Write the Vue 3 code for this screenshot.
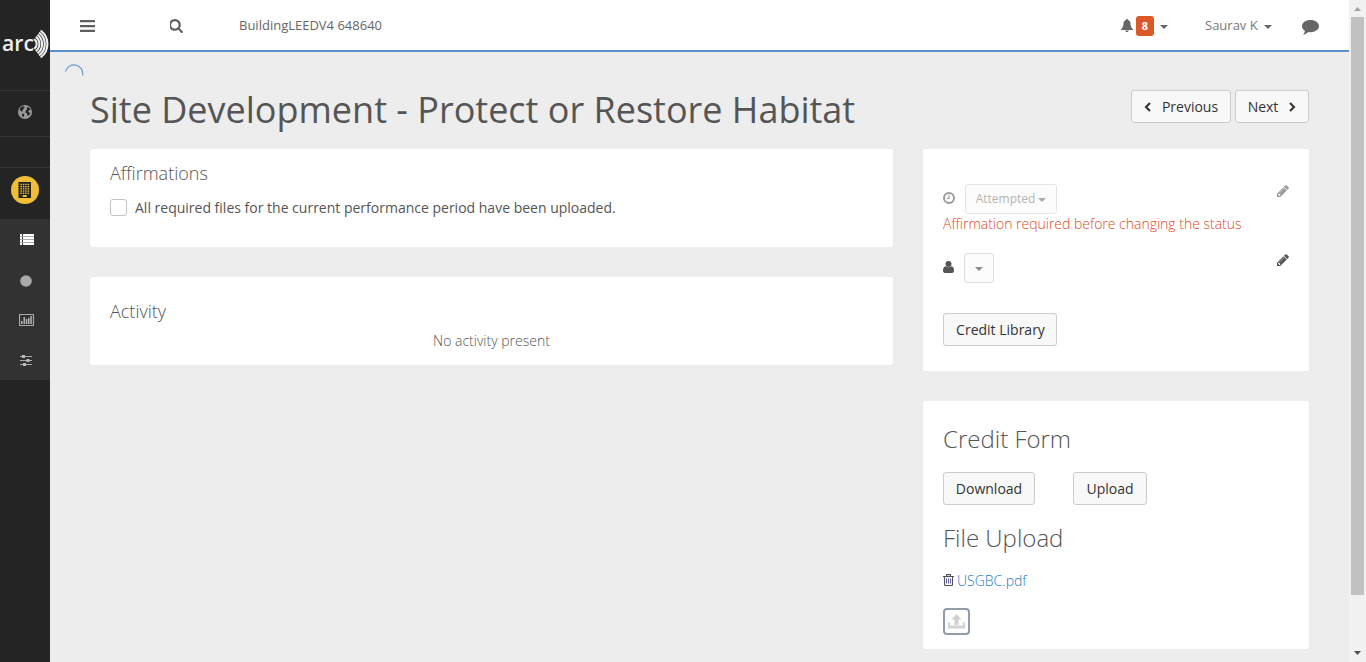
<script setup>
const arcs = [6.2, 8.9, 11.6, 14.3, 16.9].map((r) => {
  const dx = r * 0.6
  const dy = r * 0.8
  return `M${30.5 + dx} ${44 - dy}A${r} ${r} 0 0 1 ${30.5 + dx} ${44 + dy}`
})
const windows = []
for (let y = 0; y < 5; y++) for (let x = 0; x < 4; x++) windows.push({ x: 2.4 + x * 2.4, y: 1.8 + y * 2.2 })
const pencil =
  'M491 1536l91-91-235-235-91 91v107h128v128h107zm523-928q0-22-22-22-10 0-17 7l-542 542q-7 7-7 17 0 22 22 22 10 0 17-7l542-542q7-7 7-17zm-54-192l416 416-832 832h-416v-416zm683 96q0 53-37 90l-166 166-416-416 166-165q36-38 90-38 53 0 91 38l235 234q37 39 37 91z'
</script>

<template>
  <div class="app">
    <aside class="sidebar">
      <div class="logo">
        <svg width="50" height="90" viewBox="0 0 50 90">
          <text x="2" y="50.500" textLength="32" lengthAdjust="spacingAndGlyphs">arc</text>
          <path v-for="d in arcs" :key="d" :d="d" fill="none" stroke="#eee" stroke-width="2.1" />
        </svg>
      </div>
      <div class="cell globe">
        <svg width="14" height="14" viewBox="0 0 14 14">
          <circle cx="7" cy="7" r="7" fill="#999" />
          <path d="M2.200 3L4 1.500l2-.3.900 1-1.400.8.200 1.300-1.500.8.400 1.300L3 6.200 1.800 5.200zM9 1.700l2.700 1.300 1.100 2.300-1.600-.4-.9 1.300.8 1.500 1.200-.2-.8 2.300-1.900 1.200-.6-2.500-1.500-.9.200-1.800 1.500-1.300-.7-1.200.9-.8zM4.200 8.200l1.900 1.100.1 1.300-1.100 1.700-1.100-1.800z" fill="#242424" />
        </svg>
      </div>
      <div class="cell blank"></div>
      <div class="cell project">
        <div class="disc">
          <svg width="14" height="16" viewBox="0 0 14 16">
            <rect x=".5" width="12.500" height="16" fill="#242424" />
            <rect v-for="(w, i) in windows" :key="i" :x="w.x" :y="w.y" width="1.500" height="1.300" fill="#efbe36" />
            <rect x="4.700" y="13" width="4" height="2" fill="#efbe36" />
          </svg>
        </div>
      </div>
      <nav class="sub">
        <div class="item list">
          <svg width="14" height="11" viewBox="0 0 14 11">
            <path d="M0 0h2v2H0zM3 0h11v2H3zM0 3h2v2H0zM3 3h11v2H3zM0 6h2v2H0zM3 6h11v2H3zM0 9h2v2H0zM3 9h11v2H3z" fill="#fff" />
            <path d="M0 2h14v1H0zM0 5h14v1H0zM0 8h14v1H0z" fill="#aaa" />
          </svg>
        </div>
        <div class="item dot">
          <svg width="12" height="12" viewBox="0 0 12 12"><circle cx="6" cy="6" r="5.800" fill="#aaa" /></svg>
        </div>
        <div class="item chart">
          <svg width="15" height="12" viewBox="0 0 15 12">
            <rect x=".5" y=".5" width="14" height="11" rx=".5" fill="none" stroke="#b0a8b0" stroke-width="1.200" />
            <path d="M2 7h1.500v3H2zM4.500 3H6v7H4.500zM6.800 5h1.500v5H6.800zM9 4h1.500v6H9zM11.300 2h1.500v8h-1.500z" fill="#b4b4b4" />
          </svg>
        </div>
        <div class="item dot">
          <svg width="12" height="11" viewBox="0 0 12 11">
            <path d="M0 1h12v1H0zM0 5h12v1H0zM0 9h12v1H0z" fill="#aaa" />
            <path d="M2 0h3v3H2zM6.500 4h3v3h-3zM3 8h3v3H3z" fill="#bbb" />
          </svg>
        </div>
      </nav>
    </aside>

    <div class="page">
      <header class="topbar">
        <svg class="menu" width="15" height="12" viewBox="0 0 15 12"><path d="M0 0h15v2.200H0zM0 5h15v2.200H0zM0 9.800h15V12H0z" fill="#5f5f5f" /></svg>
        <svg class="search" width="14" height="14" viewBox="128 128 1664 1664">
          <path fill="#5f5f5f" d="M1152 832q0-185-131.500-316.500t-316.500-131.500-316.500 131.500-131.500 316.500 131.500 316.500 316.500 131.500 316.500-131.500 131.500-316.500zm512 832q0 52-38 90t-90 38q-54 0-90-38l-343-342q-179 124-399 124-143 0-273.500-55.500t-225-150-150-225-55.500-273.500 55.500-273.500 150-225 225-150 273.500-55.500 273.500 55.500 225 150 150 225 55.500 273.500q0 220-124 399l343 343q37 37 37 90z" />
        </svg>
        <span class="crumb">BuildingLEEDV4 648640</span>
        <div class="tools">
          <svg class="bell" width="12" height="13" viewBox="0 0 12 13"><path d="M6 0c.7 0 1 .4 1 1 1.700.4 2.400 1.700 2.500 3.300.1 2.800.7 4.400 2.500 6.200v.5H0v-.5c1.800-1.800 2.400-3.400 2.500-6.200C2.600 2.700 3.300 1.400 5 1c0-.6.3-1 1-1zM4.300 11.500h3.400C7.600 12.500 6.900 13 6 13s-1.600-.5-1.700-1.500z" fill="#666" /></svg>
          <span class="badge">8</span>
          <i class="caret c1"></i>
          <span class="user">Saurav K</span>
          <i class="caret c2"></i>
          <svg class="chat" width="17" height="15" viewBox="0 0 17 15"><path d="M8.500 0C13.300 0 17 2.700 17 6.100s-3.700 6.100-8.500 6.100c-.8 0-1.500-.1-2.200-.2C4.800 13.500 3 14.400.9 14.800c1.200-1.100 1.800-2.400 1.900-4C1.100 9.700 0 8 0 6.100 0 2.700 3.700 0 8.500 0z" fill="#666" /></svg>
        </div>
      </header>

      <main class="content">
        <svg class="spinner" width="20" height="12" viewBox="0 0 20 12"><path d="M1.500 7.700A8.700 8.700 0 0 1 18.500 11.500" fill="none" stroke="#6d9bd1" stroke-width="1.200" /></svg>
        <div class="heading">
          <h1>Site Development - Protect or Restore Habitat</h1>
          <div class="pager">
            <button class="btn prev">
              <svg width="7" height="10" viewBox="0 0 7 10"><path d="M6 1L2 5l4 4" fill="none" stroke="#333" stroke-width="2.100" /></svg>
              <span>Previous</span>
            </button>
            <button class="btn next">
              <span>Next</span>
              <svg width="7" height="10" viewBox="0 0 7 10"><path d="M1 1l4 4-4 4" fill="none" stroke="#333" stroke-width="2.100" /></svg>
            </button>
          </div>
        </div>
        <div class="columns">
          <div class="left">
            <section class="card affirm">
              <h4>Affirmations</h4>
              <label class="check"><i class="box"></i><span>All required files for the current performance period have been uploaded.</span></label>
            </section>
            <section class="card activity">
              <h4>Activity</h4>
              <p><span>No activity present</span></p>
            </section>
          </div>
          <div class="right">
            <section class="card status">
              <div class="row first">
                <svg class="clock" width="12" height="12" viewBox="0 0 12 12"><circle cx="6" cy="6" r="5" fill="none" stroke="#999" stroke-width="1.900" /><path d="M6 3v3.500H3.800" fill="none" stroke="#999" stroke-width="1.100" /></svg>
                <span class="select attempted"><span>Attempted</span><i class="caret"></i></span>
                <svg class="pencil faded" width="12" height="12" viewBox="128 256 1536 1536"><path :d="pencil" transform="translate(0 128)" /></svg>
              </div>
              <p class="warn"><span>Affirmation required before changing the status</span></p>
              <div class="row second">
                <svg class="person" width="11" height="12" viewBox="0 0 11 12"><ellipse cx="5.500" cy="3" rx="3" ry="3" fill="#555" /><path d="M2.500 5.200c1.800 1.500 4.200 1.500 6 0C10.300 5.500 11 7.300 11 9.500c0 1.500-.8 2.500-2 2.500H2c-1.200 0-2-1-2-2.500 0-2.200.7-4 2.500-4.300z" fill="#555" /></svg>
                <span class="select empty"><i class="caret"></i></span>
                <svg class="pencil" width="12" height="12" viewBox="128 256 1536 1536"><path :d="pencil" transform="translate(0 128)" /></svg>
              </div>
              <button class="btn library">Credit Library</button>
            </section>
            <section class="card forms">
              <h3 class="credit">Credit Form</h3>
              <div class="actions">
                <button class="btn download">Download</button>
                <button class="btn upload">Upload</button>
              </div>
              <h3 class="file-title">File Upload</h3>
              <div class="file">
                <svg width="11" height="12" viewBox="0 0 11 12"><path d="M0 2.500h11M3.500 2.500V.600h4v1.900M1.500 2.500v8c0 .6.300 1 .9 1h6.200c.6 0 .9-.4.9-1v-8" fill="none" stroke="#505060" stroke-width="1.100" /><path d="M3.500 4.500v5M5.500 4.500v5M7.500 4.500v5" stroke="#5f5f9c" stroke-width="1" /></svg>
                <a>USGBC.pdf</a>
              </div>
              <div class="drop">
                <svg width="17" height="15" viewBox="0 0 17 15"><path d="M8.500 0l5 5.500h-3V11h-4V5.500h-3zM0 8.500h2.200v3h12.600v-3H17v6H0z" fill="#d2d2d2" /></svg>
              </div>
            </section>
          </div>
        </div>
      </main>
    </div>

    <div class="scrollbar">
      <svg width="17" height="17" viewBox="0 0 17 17"><path d="M5 11l3.500-4 3.500 4z" fill="#a3a3a3" /></svg>
      <div class="thumb"></div>
      <svg class="down" width="17" height="17" viewBox="0 0 17 17"><path d="M5 6l3.500 4L12 6z" fill="#505050" /></svg>
    </div>
  </div>
</template>

<style>
body { overflow: hidden; }
</style>

<style scoped>
* { box-sizing: border-box; }
svg { display: block; flex: none; }
h1, h3, h4, p { margin: 0; }
.app { display: flex; width: 1366px; height: 662px; overflow: hidden; background: #ededed; font-family: "Open Sans", sans-serif; color: #555; font-size: 14px; }
.sidebar { width: 50px; flex: none; background: #242424; }
.logo { height: 90px; }
.logo text { font: 600 22px "Open Sans", sans-serif; fill: #eee; }
.cell { border-top: 1px solid #343434; display: flex; justify-content: center; }
.globe { height: 46px; padding-top: 14px; }
.blank { height: 31px; }
.project { height: 52px; padding-top: 8px; }
.disc { width: 28px; height: 28px; border-radius: 50%; background: #efbe36; display: flex; align-items: center; justify-content: center; }
.sub { height: 161px; background: #323232; padding-top: 1px; }
.item { height: 40px; display: flex; align-items: center; justify-content: center; padding-left: 2px; }
.list { padding-bottom: 1px; padding-left: 3px; }
.dot { padding: 1px 0 0 1px; }
.chart { padding-left: 3px; }
.page { width: 1299px; flex: none; }
.topbar { height: 52px; background: #fff; border-bottom: 2px solid #5b92cb; display: flex; align-items: center; padding-left: 30px; }
.menu { margin-top: 2px; }
.search { margin-left: 74.5px; margin-top: 1px; }
.crumb { margin-left: 55.5px; font-size: 13px; line-height: 20px; color: #666; white-space: nowrap; }
.tools { margin-left: auto; display: flex; align-items: center; padding-right: 30px; }
.badge { width: 18px; height: 20px; margin: 1px 0 0 3px; border-radius: 3px; background: #dd5828; color: #fff; font-weight: 700; font-size: 11px; line-height: 20px; text-align: center; }
.caret { width: 0; height: 0; border: 4px solid transparent; border-top-color: currentColor; border-bottom: 0; color: #666; flex: none; }
.c1 { margin: 3px 0 0 6px; }
.user { margin-left: 37px; width: 54px; font-size: 13px; line-height: 20px; color: #777; white-space: nowrap; }
.c2 { margin: 3px 0 0 5px; }
.chat { margin: 5px 0 0 30px; }
.content { height: 610px; padding: 0 40px; }
.spinner { margin-left: -26px; position: relative; top: 12px; }
.heading { display: flex; justify-content: space-between; height: 85px; }
h1 { font-size: 36px; font-weight: 400; line-height: 48px; margin-top: 22px; white-space: nowrap; color: #555; }
.pager { display: flex; gap: 4px; margin-top: 26px; }
.btn { height: 33px; border: 1px solid #ccc; border-radius: 3px; background: #f8f8f8; color: #333; font: 400 14px/20px "Open Sans", sans-serif; padding: 0; display: flex; align-items: center; justify-content: center; white-space: nowrap; }
.prev { width: 100px; gap: 11px; }
.next { width: 74px; gap: 11px; }
.columns { display: flex; gap: 30px; }
.left { width: 803px; display: flex; flex-direction: column; gap: 30px; }
.right { width: 386px; display: flex; flex-direction: column; gap: 30px; }
.card { background: #fff; border-radius: 3px; padding: 0 20px; }
h4 { font-size: 18px; line-height: 24px; font-weight: 300; }
.affirm { height: 98px; padding-top: 12px; }
.check { display: flex; align-items: center; height: 20px; margin-top: 12px; white-space: nowrap; }
.box { width: 17px; height: 17px; border: 1px solid #c4c4c4; border-radius: 3px; margin-right: 8px; }
.activity { height: 88px; padding-top: 22px; }
.activity p { text-align: center; line-height: 20px; margin-top: 8px; font-weight: 300; }
.status { height: 222px; padding-top: 35px; }
.row { display: flex; align-items: center; height: 30px; }
.select { height: 30px; border: 1px solid #e5e5e5; border-radius: 3px; background: #fcfcfc; display: flex; align-items: center; justify-content: center; }
.clock { margin: -2px 10px 0 0; }
.attempted { width: 92px; font-size: 12px; color: #b4b4b4; gap: 3px; padding-bottom: 2px; }
.attempted .caret { color: #aaa; margin-top: 4px; }
.pencil { margin-left: auto; margin-top: -17px; fill: #555; }
.faded { fill: #999; }
.warn { font-weight: 300; color: #dd4b25; line-height: 20px; white-space: nowrap; letter-spacing: -0.01px; }
.second { margin-top: 19px; }
.person { margin: -2px 10px 0 0; }
.empty { width: 30px; border-color: #dedede; }
.empty .caret { color: #888; margin-top: 2px; }
.library { width: 114px; margin-top: 30px; padding-left: 1px; }
.forms { height: 248px; padding-top: 22px; }
h3 { font-size: 24px; font-weight: 300; line-height: 32px; }
.actions { display: flex; gap: 38px; margin-top: 17px; }
.download { width: 92px; }
.upload { width: 74px; }
.file-title { margin-top: 17px; }
.file { display: flex; align-items: center; gap: 3px; height: 20px; margin-top: 16px; }
.file a { color: #1c7dbd; font-weight: 300; }
.drop { width: 27px; height: 27px; margin-top: 18px; border: 2px solid #929caa; border-radius: 4px; display: flex; align-items: center; justify-content: center; }
.scrollbar { width: 17px; flex: none; background: #f1f1f1; display: flex; flex-direction: column; }
.thumb { width: 13px; height: 578px; margin-left: 2px; background: #c1c1c1; }
.down { margin-top: auto; }
</style>
